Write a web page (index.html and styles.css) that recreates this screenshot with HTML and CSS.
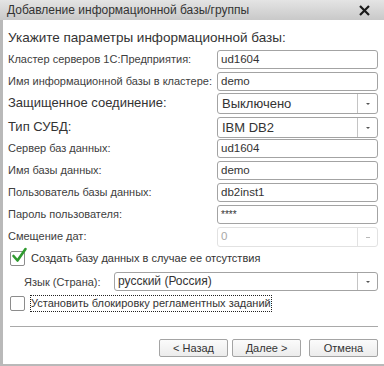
FILE: index.html
```html
<!DOCTYPE html>
<html lang="ru">

<head>
    <meta charset="UTF-8">
    <meta name="viewport" content="width=device-width, initial-scale=1.0">
    <title>Добавление информационной базы/группы</title>
    <link rel="stylesheet" href="styles.css">
</head>

<body>
    <div class="window">
        <div class="titlebar">
            <span class="title">Добавление информационной базы/группы</span>
            <svg class="close" width="11" height="11" viewBox="0 0 11 11">
                <path d="M1 1 L10 10 M10 1 L1 10" stroke="#1a1a1a" stroke-width="2.2" />
            </svg>
        </div>
        <div class="content">
            <h2 class="heading">Укажите параметры информационной базы:</h2>

            <div class="row r22">
                <label class="lbl">Кластер серверов 1С:Предприятия:</label>
                <div class="field">ud1604</div>
            </div>
            <div class="row r21">
                <label class="lbl">Имя информационной базы в кластере:</label>
                <div class="field">demo</div>
            </div>
            <div class="row r24">
                <label class="lbl big">Защищенное соединение:</label>
                <div class="field select">
                    <span class="val">Выключено</span>
                    <span class="drop"><i class="arrow"></i></span>
                </div>
            </div>
            <div class="row r22">
                <label class="lbl big">Тип СУБД:</label>
                <div class="field select">
                    <span class="val">IBM DB2</span>
                    <span class="drop"><i class="arrow"></i></span>
                </div>
            </div>
            <div class="row r22">
                <label class="lbl">Сервер баз данных:</label>
                <div class="field">ud1604</div>
            </div>
            <div class="row r22">
                <label class="lbl">Имя базы данных:</label>
                <div class="field">demo</div>
            </div>
            <div class="row r22">
                <label class="lbl">Пользователь базы данных:</label>
                <div class="field">db2inst1</div>
            </div>
            <div class="row r22">
                <label class="lbl">Пароль пользователя:</label>
                <div class="field pass">****</div>
            </div>
            <div class="row r22">
                <label class="lbl">Смещение дат:</label>
                <div class="field disabled">
                    <span class="val">0</span>
                    <span class="drop"><i class="dash"></i></span>
                </div>
            </div>

            <div class="check-row first">
                <span class="checkbox">
                    <svg class="tick" width="18" height="18" viewBox="0 0 18 18">
                        <path d="M3.5 9 L7.5 13.5 L15.5 2" fill="none" stroke="#2f9a2f" stroke-width="2.6" stroke-linecap="round" stroke-linejoin="round" />
                    </svg>
                </span>
                <span class="check-text">Создать базу данных в случае ее отсутствия</span>
            </div>
            <div class="lang-row">
                <label class="lang-lbl">Язык (Страна):</label>
                <div class="field select wide">
                    <span class="val">русский (Россия)</span>
                    <span class="drop"><i class="arrow"></i></span>
                </div>
            </div>
            <div class="check-row">
                <span class="checkbox"></span>
                <span class="check-text focus">Установить блокировку регламентных заданий</span>
            </div>

            <div class="separator"></div>

            <div class="buttons">
                <button class="btn">&lt; Назад</button>
                <button class="btn">Далее &gt;</button>
                <button class="btn cancel">Отмена</button>
            </div>
        </div>
    </div>
</body>

</html>
```

FILE: styles.css
```css
* {
    padding: 0;
    margin: 0;
    box-sizing: border-box;
}

body {
    font-family: "Liberation Sans", Arial, sans-serif;
    background: #fff;
    color: #333;
}

.window {
    width: 384px;
    height: 366px;
    overflow: hidden;
    display: flex;
    flex-direction: column;
}

.titlebar {
    height: 20px;
    flex: none;
    display: flex;
    align-items: center;
    justify-content: space-between;
    padding: 0 14px 0 7px;
    background: linear-gradient(#e4e4e4, #c9c9c9);
}

.title {
    font-size: 12px;
    color: #333;
}

.content {
    flex: 1;
    border-left: 3px solid #b9b9b9;
    border-bottom: 2px solid #b9b9b9;
    padding: 0 6px 0 5px;
    display: flex;
    flex-direction: column;
}

.heading {
    font-size: 13.5px;
    font-weight: normal;
    line-height: 18px;
    padding-top: 9px;
    height: 30px;
    color: #333;
}

.row {
    display: flex;
    align-items: flex-start;
}

.r21 { height: 21px; }
.r22 { height: 22px; }
.r24 { height: 24px; }

.lbl {
    width: 209px;
    font-size: 11px;
    line-height: 19px;
    color: #404040;
    white-space: nowrap;
}

.lbl.big {
    font-size: 13px;
    line-height: 20px;
    color: #333;
}

.field {
    width: 161px;
    height: 19px;
    border: 1px solid #a3a3a3;
    border-radius: 3px;
    font-size: 11.5px;
    line-height: 17px;
    padding-left: 3px;
    color: #333;
    background: #fff;
}

.field.pass {
    font-size: 10px;
}

.select {
    height: 21px;
    display: flex;
    font-size: 13px;
    line-height: 19px;
    padding-left: 4px;
}

.select .val,
.disabled .val {
    flex: 1;
}

.drop {
    width: 20px;
    border-left: 1px solid #c4c4c4;
    display: flex;
    align-items: center;
    justify-content: center;
}

.arrow {
    width: 0;
    height: 0;
    border-left: 2px solid transparent;
    border-right: 2px solid transparent;
    border-top: 2px solid #555;
}

.disabled {
    display: flex;
    border-color: #e2e2e2;
    color: #a8a8a8;
    height: 20px;
}

.disabled .drop {
    border-left-color: #e2e2e2;
}

.dash {
    width: 4px;
    height: 1px;
    background: #b8b8b8;
}

.check-row {
    display: flex;
    align-items: center;
    height: 18px;
    margin-top: 3px;
    padding-left: 2px;
}

.check-row.first {
    margin-top: 0;
}

.checkbox {
    position: relative;
    width: 15px;
    height: 15px;
    flex: none;
    border: 1px solid #8c8c8c;
    border-radius: 2px;
    background: #fff;
    margin-right: 6px;
}

.tick {
    position: absolute;
    left: -1px;
    top: -5px;
}

.check-text {
    font-size: 11px;
    color: #333;
    line-height: 15px;
}

.focus {
    outline: 1px dotted #222;
}

.lang-row {
    display: flex;
    align-items: center;
    height: 19px;
    margin-top: 5px;
}

.lang-lbl {
    width: 106px;
    padding-left: 16px;
    font-size: 11px;
    color: #404040;
    white-space: nowrap;
}

.wide {
    width: 264px;
    height: 19px;
    font-size: 12px;
    line-height: 17px;
    padding-left: 3px;
}

.separator {
    height: 1px;
    background: #a9a9a9;
    margin-top: 14px;
    margin-left: 2px;
}

.buttons {
    display: flex;
    justify-content: flex-end;
    gap: 4px;
    margin-top: 12px;
}

.btn {
    width: 69px;
    height: 18px;
    border: 1px solid #a4a4a4;
    border-radius: 2px;
    background: linear-gradient(#fbfbfb, #ececec);
    font-family: "Liberation Sans", Arial, sans-serif;
    font-size: 11px;
    color: #333;
}

.btn.cancel {
    margin-left: 4px;
}
```
